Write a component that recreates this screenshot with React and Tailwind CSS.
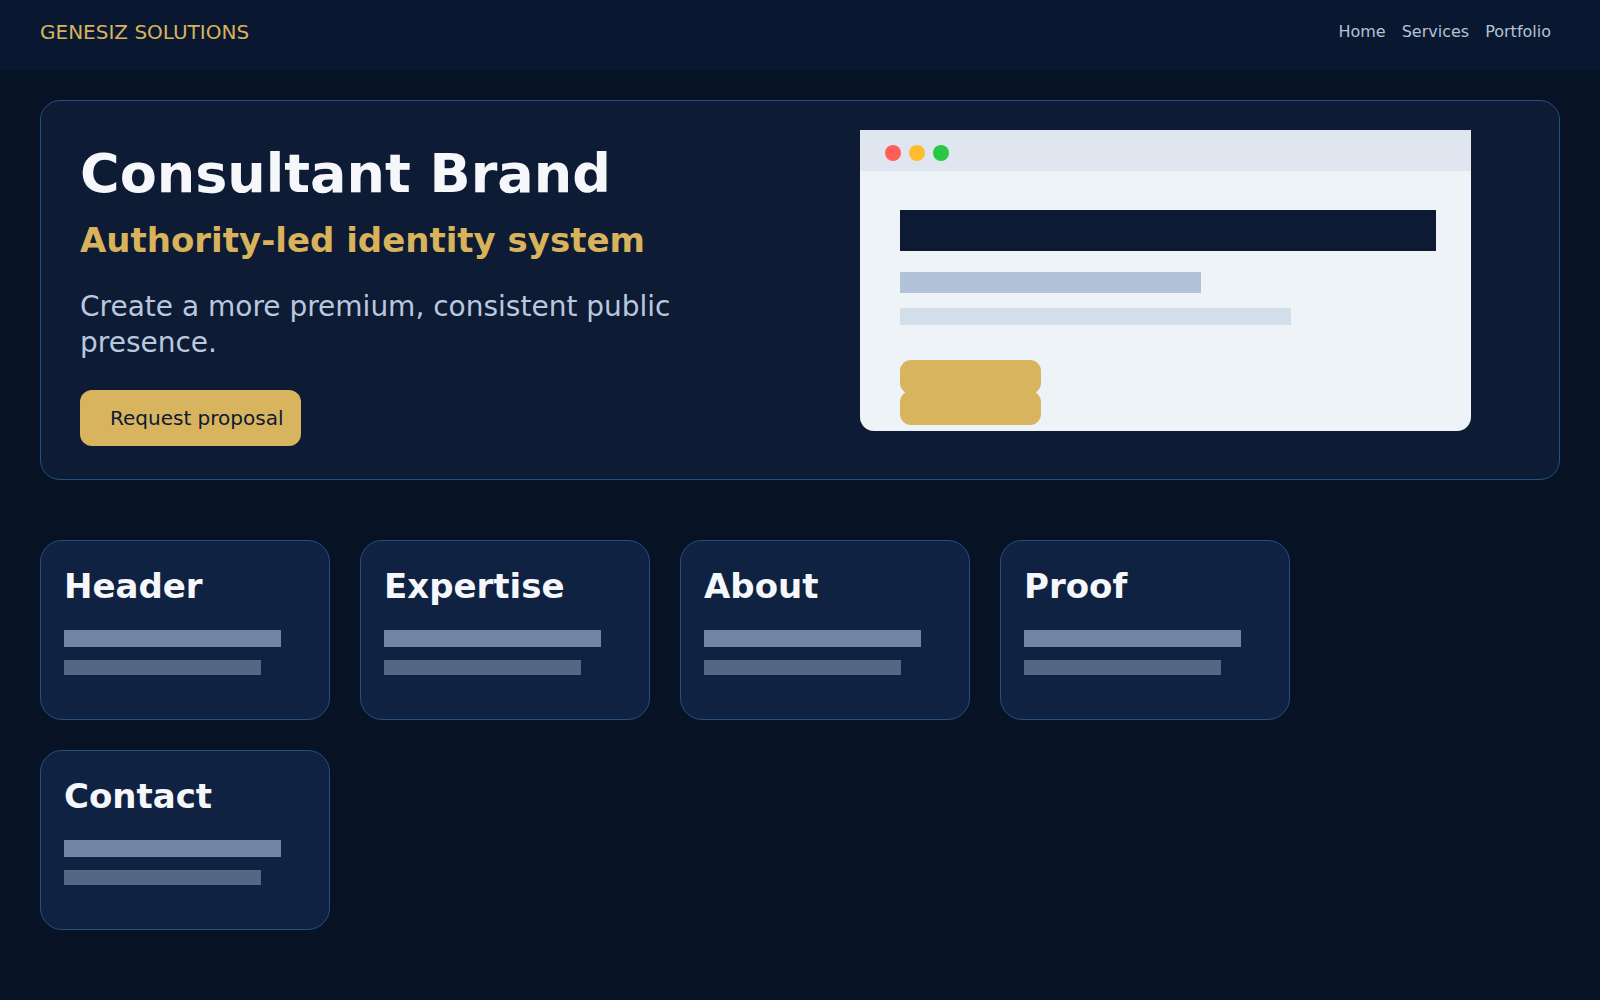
const NAV = ['Home', 'Services', 'Portfolio'];

const SECTIONS = ['Header', 'Expertise', 'About', 'Proof', 'Contact'];

function BrowserPreview() {
  return (
    <div className="w-[611px] h-[301px] shrink-0 bg-[#eef3f8] rounded-b-[14px] overflow-hidden">
      <div className="h-[41px] bg-[#dfe6f0] flex gap-2 pl-[25px] pt-[15px]">
        <span className="w-4 h-4 rounded-full bg-[#ff5f57]" />
        <span className="w-4 h-4 rounded-full bg-[#febc2e]" />
        <span className="w-4 h-4 rounded-full bg-[#28c840]" />
      </div>
      <div className="pl-[40px] pr-[35px] pt-[39px]">
        <div className="h-[41px] bg-[#0c1a33]" />
        <div className="mt-[21px] h-[21px] w-[301px] bg-[#b2c3d9]" />
        <div className="mt-[15px] h-[17px] w-[391px] bg-[#d3deeb]" />
        <div className="mt-[35px] w-[141px]">
          <div className="h-[34px] rounded-[11px] bg-[#d9b45e]" />
          <div className="-mt-[3px] h-[34px] rounded-[11px] bg-[#d9b45e]" />
        </div>
      </div>
    </div>
  );
}

function SectionCard({ title }) {
  return (
    <div className="w-[290px] h-[180px] bg-[#0f2241] border border-[#24507f] rounded-[22px] pt-[25px] px-[23px]">
      <h3 className="text-[34px] leading-[40px] font-bold text-[#f5f7fb]">{title}</h3>
      <div className="mt-[24px] h-[17px] w-[217px] bg-[#7286a3]" />
      <div className="mt-[13px] h-[15px] w-[197px] bg-[#536882]" />
    </div>
  );
}

export default function App() {
  return (
    <div className="min-h-screen bg-[#071324] font-['DejaVu_Sans',sans-serif]">
      <header className="h-[71px] bg-[#091830] flex items-center justify-between pl-10 pr-[49px] pb-[7px]">
        <div className="text-[20px] leading-[20px] text-[#d9b35c]">GENESIZ SOLUTIONS</div>
        <nav className="flex gap-4 text-[16px] leading-[16px] text-[#b4c2d6]">
          {NAV.map((n) => (
            <a key={n} href="#" className="hover:text-white">{n}</a>
          ))}
        </nav>
      </header>

      <main className="px-10 pt-[29px] pb-[70px]">
        <section className="flex bg-[#0d1b34] border border-[#24507f] rounded-[20px] pl-[39px] pt-[29px] pb-[33px]">
          <div className="w-[680px] shrink-0 pt-[14px]">
            <h1 className="text-[54px] leading-[60px] font-bold text-[#f5f7fb]">Consultant Brand</h1>
            <h2 className="mt-[16px] text-[34px] leading-[40px] font-bold text-[#d9b35c]">
              Authority-led identity system
            </h2>
            <p className="mt-[29px] text-[28px] leading-[36px] text-[#b9c8de]">
              Create a more premium, consistent public presence.
            </p>
            <button className="mt-[29px] h-[56px] inline-flex items-center pl-[30px] pr-[18px] bg-[#d9b45e] rounded-[12px] text-[20px] leading-[24px] text-[#0c1a33]">
              Request proposal
            </button>
          </div>
          <div className="ml-[100px]">
            <BrowserPreview />
          </div>
        </section>

        <div className="mt-[60px] flex flex-wrap gap-[30px]">
          {SECTIONS.map((s) => (
            <SectionCard key={s} title={s} />
          ))}
        </div>
      </main>
    </div>
  );
}
